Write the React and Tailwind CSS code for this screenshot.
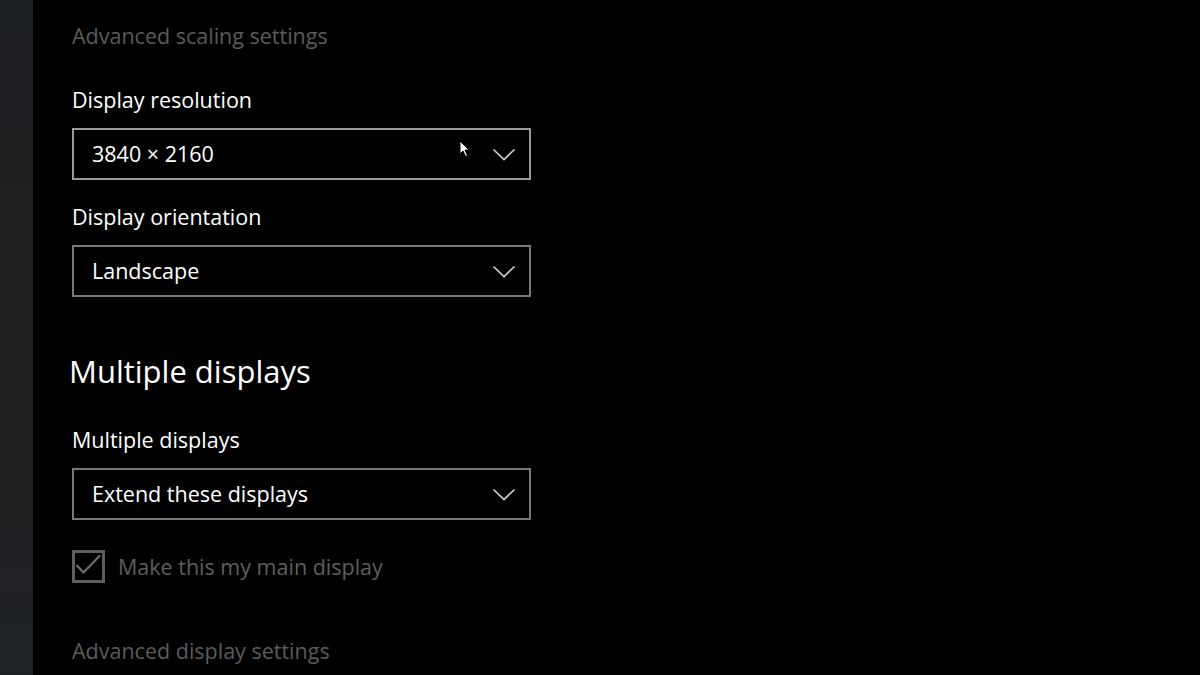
import React from 'react';

const Chevron = () => (
  <svg width="24" height="13" viewBox="0 0 24 13" className="shrink-0">
    <path d="M1.5 1.5 L12 11.5 L22.5 1.5" fill="none" stroke="#d0d0d0" strokeWidth="1.7" />
  </svg>
);

const Dropdown = ({ value, hover, children }) => (
  <div
    className={`relative flex items-center justify-between w-[459px] h-[52px] border-2 pl-[18px] pr-[13px] ${
      hover ? 'border-[#9a9a9a]' : 'border-[#787878]'
    }`}
  >
    <span className="text-[21.5px] text-white">{value}</span>
    <Chevron />
    {children}
  </div>
);

const Cursor = () => (
  <svg width="12" height="18" viewBox="0 0 12 18" className="absolute left-[385px] top-[10px]">
    <path d="M1 1 L1 14 L4 11 L6.5 16.5 L8.5 15.5 L6 10 L10 10 Z" fill="#ffffff" stroke="#000" strokeWidth="1" />
  </svg>
);

const App = () => {
  return (
    <div
      className="flex w-[1200px] h-[675px] overflow-hidden bg-black"
      style={{ fontFamily: '"Open Sans", "Noto Sans", sans-serif' }}
    >
      <div className="w-[33px] h-full shrink-0 bg-gradient-to-b from-[#1c1f23] via-[#221f20] to-[#1e2226]" />
      <div className="flex flex-col pl-[39px] pt-[20px]">
        <div className="text-[21.5px] leading-[32px] text-[#5b5b5b]">Advanced scaling settings</div>

        <div className="mt-[32px] text-[21.5px] leading-[32px] text-white">Display resolution</div>
        <div className="mt-[12px]">
          <Dropdown value="3840 × 2160" hover>
            <Cursor />
          </Dropdown>
        </div>

        <div className="mt-[21px] text-[21.5px] leading-[32px] text-white">Display orientation</div>
        <div className="mt-[12px]">
          <Dropdown value="Landscape" />
        </div>

        <div className="mt-[54px] -ml-[3px] text-[31px] leading-[40px] text-white">Multiple displays</div>

        <div className="mt-[33px] text-[21.5px] leading-[32px] text-white">Multiple displays</div>
        <div className="mt-[12px]">
          <Dropdown value="Extend these displays" />
        </div>

        <div className="mt-[30px] flex items-center gap-[13px]">
          <div className="w-[33px] h-[33px] border-[3px] border-[#5e5e5e] flex items-center justify-center">
            <svg width="27" height="27" viewBox="0 0 27 27">
              <path d="M1.5 12 L8.5 19.5 L25 2.5" fill="none" stroke="#6e6e6e" strokeWidth="2.2" />
            </svg>
          </div>
          <span className="text-[21.5px] leading-[32px] text-[#5e5e5e]">Make this my main display</span>
        </div>

        <div className="mt-[52px] text-[21.5px] leading-[32px] text-[#5b5b5b]">Advanced display settings</div>
      </div>
    </div>
  );
};

export default App;
